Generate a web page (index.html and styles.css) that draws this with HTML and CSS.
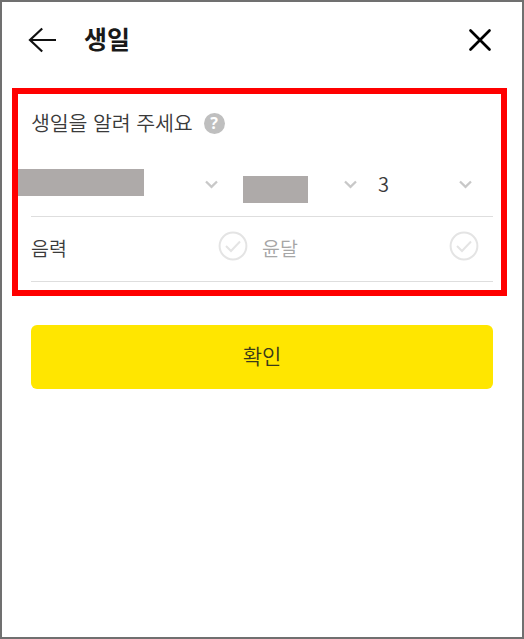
FILE: index.html
```html
<!DOCTYPE html>
<html lang="ko">
<head>
    <meta charset="UTF-8">
    <meta name="viewport" content="width=device-width,user-scalable=no"/>
    <title>생일</title>
    <link rel="stylesheet" href="styles.css">
</head>
<body>
    <section class="wrap">
        <header class="header">
            <a href="javascript:;" class="back">
                <svg width="28" height="26" viewBox="0 0 28 26"><path d="M14.2 1.5L2 13l12.2 11.5M2 13H28"/></svg>
            </a>
            <h1>생일</h1>
            <a href="javascript:;" class="close">
                <svg width="24" height="24" viewBox="0 0 24 24"><path d="M2.5 2.5l19 19M21.5 2.5l-19 19"/></svg>
            </a>
        </header>
        <div class="box">
            <div class="title">
                <h2>생일을 알려 주세요</h2>
                <span class="help">?</span>
            </div>
            <div class="date">
                <div class="select">
                    <span class="mask year"></span>
                    <svg class="arrow" width="13" height="9" viewBox="0 0 13 9"><path d="M1 1.5l5.5 5.3L12 1.5"/></svg>
                </div>
                <div class="select">
                    <span class="mask month"></span>
                    <svg class="arrow" width="13" height="9" viewBox="0 0 13 9"><path d="M1 1.5l5.5 5.3L12 1.5"/></svg>
                </div>
                <div class="select">
                    <span class="day">3</span>
                    <svg class="arrow" width="13" height="9" viewBox="0 0 13 9"><path d="M1 1.5l5.5 5.3L12 1.5"/></svg>
                </div>
            </div>
            <div class="options">
                <div class="option">
                    <span>음력</span>
                    <svg class="check" width="30" height="30" viewBox="0 0 30 30"><circle cx="15" cy="15" r="13.4"/><path d="M8 15l5 5L22 10.5"/></svg>
                </div>
                <div class="option off">
                    <span>윤달</span>
                    <svg class="check" width="30" height="30" viewBox="0 0 30 30"><circle cx="15" cy="15" r="13.4"/><path d="M8 15l5 5L22 10.5"/></svg>
                </div>
            </div>
        </div>
        <button class="submit">확인</button>
    </section>
</body>
</html>
```
FILE: styles.css
```css
*{
    margin: 0;
    padding: 0;
    box-sizing: border-box;
}
body{
    font-family: "Noto Sans CJK KR", sans-serif;
    font-weight: 350;
    color: #3a3a3a;
    background: #fff;
}
svg{
    display: block;
    fill: none;
}
.wrap{
    height: 639px;
    border: 2px solid #707070;
}
.header{
    height: 76px;
    padding: 0 30px 0 26px;
    display: flex;
    align-items: center;
}
.header h1{
    margin-left: 28px;
    padding-bottom: 4px;
    font-size: 25px;
    line-height: 72px;
    color: #191919;
}
.header svg{
    stroke: #111;
    stroke-width: 2.2;
}
.close{
    margin-left: auto;
}
.header .close svg{
    stroke: #000;
    stroke-width: 2.7;
    stroke-linecap: round;
}
.box{
    height: 208px;
    margin: 10px 15px 0 10px;
    padding: 0 8px 0 13px;
    border: 6px solid #f00;
}
.title{
    height: 58px;
    display: flex;
    align-items: center;
}
.title h2{
    padding-bottom: 2px;
    font-size: 20.6px;
    font-weight: 350;
    letter-spacing: -.15px;
}
.help{
    width: 21px;
    height: 21px;
    margin-left: 11px;
    border-radius: 50%;
    background: #bfbfbf;
    color: #fff;
    font: bold 16px/21px "Noto Sans", sans-serif;
    text-align: center;
}
.date{
    height: 65px;
    display: grid;
    grid-template-columns: 212px 135px 115px;
    border-bottom: 1px solid #dedede;
}
.select{
    display: flex;
    align-items: center;
    padding-right: 21px;
}
.select:first-child{
    padding-right: 25px;
}
.arrow{
    margin-top: 1px;
    margin-left: auto;
    stroke: #c8c8c8;
    stroke-width: 2.3;
}
.mask{
    height: 27px;
    background: #aeaaa9;
}
.year{
    width: 126px;
    margin: -3px 0 0 -13px;
}
.month{
    width: 65px;
    margin-top: 11px;
}
.day{
    padding-bottom: 2px;
    font-size: 20px;
}
.options{
    height: 65px;
    display: grid;
    grid-template-columns: 231px 231px;
    border-bottom: 1px solid #dedede;
}
.option{
    display: flex;
    align-items: center;
    justify-content: space-between;
    padding-right: 14px;
    font-size: 19.5px;
}
.option span{
    padding-bottom: 3px;
}
.check{
    margin-top: -6px;
    stroke: #e4e4e4;
    stroke-width: 2;
}
.off{
    color: #a6a6a6;
}
.submit{
    display: block;
    width: 462px;
    height: 64px;
    margin: 29px 0 0 29px;
    padding-bottom: 4px;
    border: 0;
    border-radius: 6px;
    background: #ffe600;
    color: #3a3a1a;
    font: 350 21px "Noto Sans CJK KR", sans-serif;
}
```
